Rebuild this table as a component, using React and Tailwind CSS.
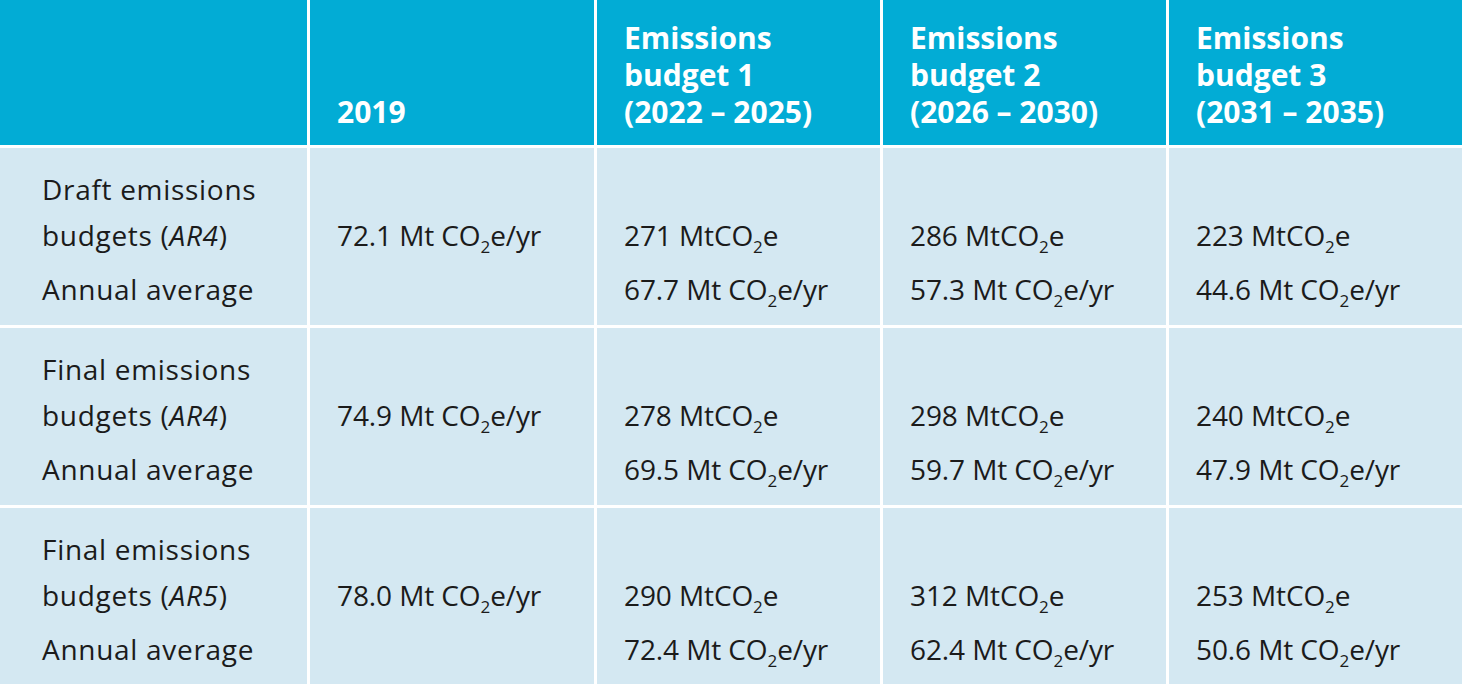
import React from 'react'

const Co2 = () => (
  <>CO<sub className="text-[17px] relative top-[7px] align-baseline leading-none">2</sub></>
)

const rows = [
  {
    label: ['Draft emissions', 'AR4'],
    y2019: '72.1',
    budgets: [['271', '67.7'], ['286', '57.3'], ['223', '44.6']],
  },
  {
    label: ['Final emissions', 'AR4'],
    y2019: '74.9',
    budgets: [['278', '69.5'], ['298', '59.7'], ['240', '47.9']],
  },
  {
    label: ['Final emissions', 'AR5'],
    y2019: '78.0',
    budgets: [['290', '72.4'], ['312', '62.4'], ['253', '50.6']],
  },
]

function HeaderCell({ children, first }) {
  return (
    <div className={`bg-[#02acd5] text-white font-bold text-[30px] h-[145px] flex items-end pb-[15px] ${first ? 'pl-[42px]' : 'pl-[27px]'}`}>
      <div className="leading-[37px]">{children}</div>
    </div>
  )
}

export default function App() {
  return (
    <div className="w-[1462px] h-[684px] overflow-hidden bg-white font-['Open_Sans','Noto_Sans',sans-serif] text-[28px] text-[#1b1b1b]">
      <div className="grid grid-cols-[307px_284px_283px_283px_1fr] gap-[3px]">
        <HeaderCell first />
        <HeaderCell>2019</HeaderCell>
        <HeaderCell>Emissions<br />budget 1<br />(2022 – 2025)</HeaderCell>
        <HeaderCell>Emissions<br />budget 2<br />(2026 – 2030)</HeaderCell>
        <HeaderCell>Emissions<br />budget 3<br />(2031 – 2035)</HeaderCell>

        {rows.map((r, i) => (
          <React.Fragment key={i}>
            <div className="bg-[#d4e8f2] pl-[42px] pt-[18px] pb-[13px] leading-[46px] tracking-[0.7px]">
              <div>{r.label[0]}</div>
              <div>budgets (<i>{r.label[1]}</i>)</div>
              <div className="mt-[8px]">Annual average</div>
            </div>
            <div className="bg-[#d4e8f2] pl-[27px] pt-[64px] leading-[46px] tracking-[-0.1px]">
              {r.y2019} Mt <Co2 />e/yr
            </div>
            {r.budgets.map((b, j) => (
              <div key={j} className="bg-[#d4e8f2] pl-[27px] pt-[64px] leading-[46px] tracking-[-0.1px]">
                <div>{b[0]} Mt<Co2 />e</div>
                <div className="mt-[8px]">{b[1]} Mt <Co2 />e/yr</div>
              </div>
            ))}
          </React.Fragment>
        ))}
      </div>
    </div>
  )
}
